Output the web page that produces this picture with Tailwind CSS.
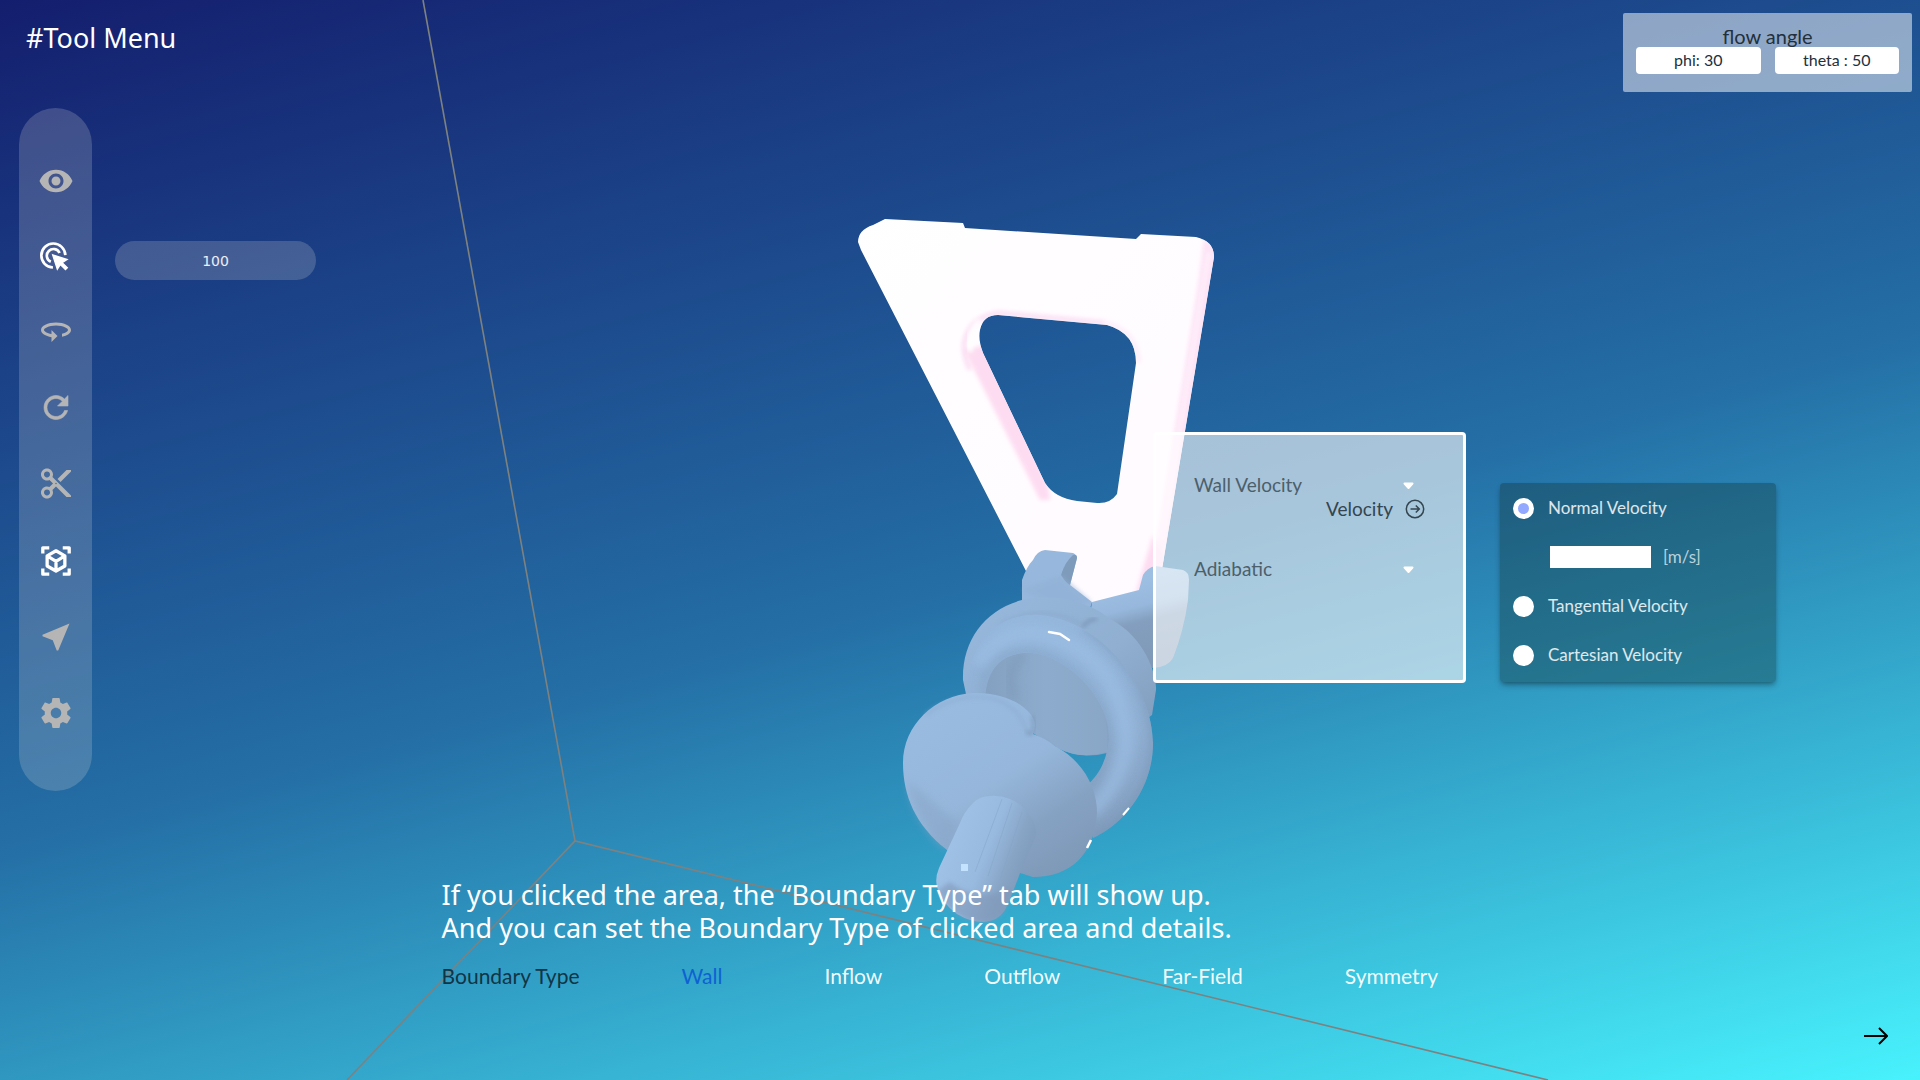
<!DOCTYPE html>
<html lang="en">
<head>
<meta charset="utf-8">
<meta name="viewport" content="width=device-width, initial-scale=1">
<title>Tool Menu</title>
<script src="https://cdn.jsdelivr.net/npm/@tailwindcss/browser@4"></script>
</head>
<body class="font-['Lato','Open_Sans',sans-serif]">
<div class="relative isolate flex min-h-screen flex-col overflow-hidden bg-[linear-gradient(165deg,#141e6e_0%,#246ea5_53%,#48f2fd_100%)]">

  <!-- 3D viewport -->
  <svg class="absolute inset-0 -z-10 h-full w-full" viewBox="0 0 1920 1080" preserveAspectRatio="xMidYMid slice" aria-hidden="true">
    <defs>
      <filter id="b2" x="-20%" y="-20%" width="140%" height="140%"><feGaussianBlur stdDeviation="2"/></filter>
      <filter id="b5" x="-30%" y="-30%" width="160%" height="160%"><feGaussianBlur stdDeviation="5"/></filter>
      <linearGradient id="plate" x1="0" y1="0" x2="1" y2="1"><stop offset="0" stop-color="#fff"/><stop offset="1" stop-color="#fffaff"/></linearGradient>
      <linearGradient id="claw" gradientUnits="userSpaceOnUse" x1="1140" y1="580" x2="1160" y2="660"><stop offset="0" stop-color="#9dbfe2"/><stop offset=".3" stop-color="#97b8dc"/><stop offset=".5" stop-color="#839ebe"/><stop offset="1" stop-color="#8099b8"/></linearGradient>
      <linearGradient id="collar" x1="0" y1="0" x2="1" y2="1"><stop offset="0" stop-color="#97b9dd"/><stop offset=".55" stop-color="#90afd1"/><stop offset="1" stop-color="#7f99b9"/></linearGradient>
      <linearGradient id="well" x1="0" y1="0" x2="1" y2="0"><stop offset="0" stop-color="#84a0c0"/><stop offset=".5" stop-color="#8daccd"/><stop offset="1" stop-color="#89a6c6"/></linearGradient>
      <linearGradient id="ring" gradientUnits="userSpaceOnUse" x1="1060" y1="620" x2="1060" y2="840"><stop offset="0" stop-color="#95b7dc"/><stop offset=".5" stop-color="#90b0d3"/><stop offset="1" stop-color="#829dbe"/></linearGradient>
      <linearGradient id="cone" gradientUnits="userSpaceOnUse" x1="950" y1="700" x2="1060" y2="870"><stop offset="0" stop-color="#99bbe0"/><stop offset=".45" stop-color="#96b7db"/><stop offset=".75" stop-color="#86a2c3"/><stop offset="1" stop-color="#7f99b8"/></linearGradient>
      <linearGradient id="pin" gradientUnits="userSpaceOnUse" x1="950" y1="840" x2="1028" y2="872"><stop offset="0" stop-color="#9fc1e6"/><stop offset=".45" stop-color="#98badf"/><stop offset=".75" stop-color="#88a5c6"/><stop offset="1" stop-color="#7f9ab9"/></linearGradient>
      <clipPath id="plateClip"><path clip-rule="evenodd" d="M858 242Q858 230 873 225L885 219L963 223L965 228L1136 239L1141 234L1196 237Q1214 241 1214 257L1161 575L1140 592L1093 603L1045 590L1027 573L861 250ZM998 315L1107 325Q1136 333 1136 363L1117 494Q1110 504 1097 503L1077 501Q1055 498 1045 483L983 353Q978 340 980 330Q983 315 998 315Z"/></clipPath>
      <clipPath id="ringClip"><path d="M967 705C963 660 985 612 1040 615C1105 622 1153 690 1153 743C1153 790 1122 825 1093 838L1085 787C1107 770 1112 740 1107 722C1098 685 1055 650 1023 653C1000 656 985 670 985 705Z"/></clipPath>
    </defs>

    <g fill="none" stroke="#7d8280" stroke-width="1.6">
      <path d="M423 0L575 841"/>
      <path d="M347 1080L575 841L1548 1080"/>
    </g>

    <!-- selected plate -->
    <g clip-path="url(#plateClip)">
      <rect x="850" y="210" width="370" height="400" fill="url(#plate)"/>
      <path d="M1204 238L1218 250L1164 570L1152 570L1198 285Z" fill="#fde3f6" filter="url(#b2)"/>
      <path d="M1209 252L1188 380L1162 540" fill="none" stroke="#fff4fc" stroke-width="3" filter="url(#b2)"/>
      <path d="M1105 323L998 313Q968 318 964 345Q964 357 970 370" fill="none" stroke="#fbdff4" stroke-width="5" filter="url(#b2)"/>
      <path d="M1105 323Q1136 330 1139 363" fill="none" stroke="#fdeefa" stroke-width="5" filter="url(#b2)"/>
      <path d="M964 350L985 345L1048 485L1050 500L1040 500Z" fill="#fddcf1" filter="url(#b2)"/>
      <path d="M980 320Q965 335 971 352" fill="none" stroke="#fff" stroke-width="5" filter="url(#b2)"/>
      <path d="M1153 535L1136 592L1146 594L1165 560Z" fill="#fddcf1" filter="url(#b2)"/>
    </g>

    <!-- clevis arms -->
    <path d="M1022 606L1022 580Q1027 566 1033 560Q1037 551 1045 550L1073 553Q1077 555 1077 558L1070 585L1092 602L1085 625Z" fill="#97b8dc"/>
    <path d="M1077 558Q1077 554 1073 555Q1065 562 1061 575Q1066 583 1070 585Z" fill="#7f9bbb"/>
    <path d="M1022 590L1061 575L1092 602L1060 610Z" fill="#8fafd3" opacity=".5" filter="url(#b2)"/>
    <path d="M1092 602L1139 590L1143 575Q1147 568 1155 566L1183 570Q1189 572 1189 580L1188 600Q1184 630 1173 658Q1168 667 1153 668L1140 665L1088 628Z" fill="url(#claw)"/>

    <!-- collar -->
    <path d="M963 680C962 640 985 610 1022 600C1060 592 1090 603 1112 620C1145 638 1157 675 1156 690L1152 715L1125 735L1107 753Q1080 760 1058 748L966 694Z" fill="url(#collar)"/>
    <path d="M1000 625Q1045 600 1085 627" fill="none" stroke="#84a2c5" stroke-width="3" opacity=".5" filter="url(#b2)"/>
    <path d="M1083 627Q1088 619 1097 619" fill="none" stroke="#7894b5" stroke-width="3" filter="url(#b2)"/>
    <path d="M983 700C980 665 1010 646 1045 655C1085 670 1112 705 1107 752Q1080 760 1058 748L1020 715Z" fill="url(#well)"/>
    <path d="M1015 700Q1003 668 1025 655" fill="none" stroke="#7b96b5" stroke-width="9" opacity=".5" filter="url(#b5)"/>

    <!-- ring -->
    <g clip-path="url(#ringClip)">
      <rect x="950" y="600" width="220" height="250" fill="url(#ring)"/>
      <path d="M985 700C982 660 1000 653 1025 653C1060 655 1100 690 1109 735Q1108 765 1088 788" fill="none" stroke="#7c98b8" stroke-width="8" opacity=".4" filter="url(#b5)"/>
      <path d="M978 665Q1000 630 1035 633Q1080 640 1108 678Q1126 710 1126 745Q1120 785 1090 812" fill="none" stroke="#9dbfe5" stroke-width="16" opacity=".6" filter="url(#b5)"/>
      <path d="M1085 625Q1122 650 1140 685Q1153 720 1153 743C1153 790 1122 825 1093 838" fill="none" stroke="#7791b0" stroke-width="8" opacity=".6" filter="url(#b5)"/>
    </g>
    <path d="M1049 632L1060 634L1069 640" fill="none" stroke="#fff" stroke-width="2.5" stroke-linecap="round"/>
    <path d="M1123 815L1129 808" stroke="#fff" stroke-width="2"/>

    <!-- cone -->
    <path d="M903 763C903 725 935 695 973 693C1010 692 1034 710 1035 725L1033 734Q1045 738 1055 746C1085 762 1097 790 1097 812C1095 855 1070 877 1033 877L947 850C915 825 903 795 903 763Z" fill="url(#cone)"/>
    <path d="M925 715Q955 693 990 698Q1020 705 1027 733" fill="none" stroke="#89a8cb" stroke-width="3" opacity=".5" filter="url(#b2)"/>
    <path d="M1032 716Q1036 727 1031 734L1026 732" fill="none" stroke="#7691b1" stroke-width="3" opacity=".7" filter="url(#b2)"/>
    <path d="M907 780Q915 825 947 850L960 825Z" fill="#88a6c8" opacity=".6" filter="url(#b5)"/>
    <path d="M1087 848L1091 840" stroke="#fff" stroke-width="2.5"/>

    <!-- pin -->
    <path d="M990 796Q980 796 973 803Q964 812 960 823L939 868Q934 880 938 890Q944 905 957 914Q970 922 984 922Q998 921 1005 910Q1013 893 1020 873L1035 838Q1038 828 1031 817Q1022 804 1010 799Q1000 795 990 796Z" fill="url(#pin)"/>
    <path d="M1002 799L975 872M1012 803L988 876M1022 812L1000 880" stroke="#86a4c6" stroke-width="1" opacity=".5"/>
    <path d="M938 890Q944 905 957 914Q970 922 984 922Q998 921 1005 910L1014 886Q980 905 950 882Z" fill="#8199ba" opacity=".6" filter="url(#b2)"/>
    <rect x="961" y="864" width="7" height="7" fill="#c3e2ff"/>
  </svg>

  <header class="flex h-27 items-start justify-between pr-2 pl-[26px]">
    <h1 class="pt-5 font-['Noto_Sans',sans-serif] text-[27px] leading-9 text-white">#Tool Menu</h1>
    <form class="mt-[13px] w-[289px] rounded-xs bg-white/50 px-[13px] pt-3 pb-[18px] text-[#22303c]">
      <h2 class="h-[22px] text-center text-[20px] leading-[22px]">flow angle</h2>
      <div class="grid grid-cols-2 gap-[14px]">
        <input aria-label="phi" value="phi: 30" class="h-[27px] w-full rounded bg-white pb-0.5 text-center text-[16px]">
        <input aria-label="theta" value="theta : 50" class="h-[27px] w-full rounded bg-white pb-0.5 text-center text-[16px]">
      </div>
    </form>
  </header>

  <main class="flex items-start pr-36 pl-[19px]">
    <nav aria-label="Tools" class="flex w-[73px] flex-col items-center gap-10 rounded-full bg-[#d4d4d4]/22 pt-[55px] pb-[60px] text-[#b5b5b5]">
      <button aria-label="Visibility" class="size-9"><svg viewBox="0 0 24 24" fill="currentColor"><path d="M12 4.5C7 4.5 2.73 7.61 1 12c1.73 4.39 6 7.5 11 7.5s9.27-3.11 11-7.5c-1.73-4.39-6-7.5-11-7.5zM12 17c-2.76 0-5-2.24-5-5s2.24-5 5-5 5 2.24 5 5-2.24 5-5 5zm0-8c-1.66 0-3 1.34-3 3s1.34 3 3 3 3-1.34 3-3-1.34-3-3-3z"/></svg></button>
      <button aria-label="Pick area" class="size-9 text-white"><svg viewBox="0.4 -0.5 27 27" fill="none" stroke="currentColor" stroke-width="2"><path d="M11.6 20.9A9 9 0 1 1 20.9 11.6"/><path d="M10 16.6A5 5 0 1 1 16.6 10"/><path d="M11.4 11.4L22.2 14.9 18.5 17.2 22.4 21.1 21 22.5 17.2 18.6 14.9 22.2Z" fill="currentColor" stroke-width="1"/></svg></button>
      <button aria-label="Rotate view" class="size-9"><svg viewBox="0 2 24 24" fill="currentColor"><path d="M12 7C6.48 7 2 9.24 2 12c0 2.24 2.94 4.13 7 4.77V20l4-4-4-4v2.73c-3.15-.56-5-1.9-5-2.73 0-1.06 3.04-3 8-3s8 1.94 8 3c0 .73-1.46 1.89-4 2.53v2.05c3.53-.77 6-2.53 6-4.58 0-2.76-4.48-5-10-5z"/></svg></button>
      <button aria-label="Reset" class="size-9"><svg viewBox="0 1 24 24" fill="currentColor"><path d="M17.65 6.35C16.2 4.9 14.21 4 12 4c-4.42 0-7.99 3.58-7.99 8s3.57 8 7.99 8c3.73 0 6.84-2.55 7.73-6h-2.08c-.82 2.33-3.04 4-5.65 4-3.31 0-6-2.69-6-6s2.69-6 6-6c1.66 0 3.14.69 4.22 1.78L13 11h7V4l-2.35 2.35z" stroke="currentColor" stroke-width=".4"/></svg></button>
      <button aria-label="Cut" class="size-9"><svg viewBox="0 1 24 24" fill="currentColor"><path d="M9.64 7.64c.23-.5.36-1.05.36-1.64 0-2.21-1.79-4-4-4S2 3.79 2 6s1.79 4 4 4c.59 0 1.14-.13 1.64-.36L10 12l-2.36 2.36C7.14 14.13 6.59 14 6 14c-2.21 0-4 1.79-4 4s1.79 4 4 4 4-1.79 4-4c0-.59-.13-1.14-.36-1.64L12 14l7 7h3v-1L9.64 7.64zM6 8c-1.1 0-2-.89-2-2s.9-2 2-2 2 .89 2 2-.9 2-2 2zm0 12c-1.1 0-2-.89-2-2s.9-2 2-2 2 .89 2 2-.9 2-2 2zm6-7.5c-.28 0-.5-.22-.5-.5s.22-.5.5-.5.5.22.5.5-.22.5-.5.5zM19 3l-6 6 2 2 7-7V3z"/></svg></button>
      <button aria-label="Boundary type" class="size-9 text-white"><svg viewBox="0 0 24 24" fill="none" stroke="currentColor" stroke-width="2.2"><path d="M3.2 7V3.2H7.5M16.5 3.2H20.8V7M20.8 17V20.8H16.5M7.5 20.8H3.2V17" stroke-linejoin="round"/><path d="M12 5.2L17.9 8.6V15.3L12 18.7 6.1 15.3V8.6ZM6.1 8.6L12 12.2 17.9 8.6M12 12.2V18.7" stroke-width="2.2" stroke-linejoin="round"/></svg></button>
      <button aria-label="Navigate" class="size-9"><svg viewBox="0 0 24 24" fill="currentColor"><path d="M21 3L3 10.53v.98l6.84 2.65L12.48 21h.98L21 3z"/></svg></button>
      <button aria-label="Settings" class="size-9"><svg viewBox="0 0 24 24" fill="currentColor"><path d="M19.43 12.98c.04-.32.07-.64.07-.98s-.03-.66-.07-.98l2.11-1.65c.19-.15.24-.42.12-.64l-2-3.46c-.12-.22-.39-.3-.61-.22l-2.49 1c-.52-.4-1.08-.73-1.69-.98l-.38-2.65C14.46 2.18 14.25 2 14 2h-4c-.25 0-.46.18-.49.42l-.38 2.65c-.61.25-1.17.59-1.69.98l-2.49-1c-.23-.09-.49 0-.61.22l-2 3.46c-.13.22-.07.49.12.64l2.11 1.65c-.04.32-.07.65-.07.98s.03.66.07.98l-2.11 1.65c-.19.15-.24.42-.12.64l2 3.46c.12.22.39.3.61.22l2.49-1c.52.4 1.08.73 1.69.98l.38 2.65c.03.24.24.42.49.42h4c.25 0 .46-.18.49-.42l.38-2.65c.61-.25 1.17-.59 1.69-.98l2.49 1c.23.09.49 0 .61-.22l2-3.46c.12-.22.07-.49-.12-.64l-2.11-1.65zM12 15.5c-1.93 0-3.5-1.57-3.5-3.5s1.57-3.5 3.5-3.5 3.5 1.57 3.5 3.5-1.57 3.5-3.5 3.5z"/></svg></button>
    </nav>

    <input aria-label="Selection size" value="100" class="mt-[133px] ml-[23px] h-[39px] w-[201px] rounded-full bg-[#d4d4d4]/22 text-center font-['DejaVu_Sans',sans-serif] text-[14px] text-white/90">

    <div class="mt-81 ml-auto flex items-start gap-[34px]">
      <section aria-label="Wall settings" class="h-[251px] w-[313px] rounded border-3 border-white bg-white/60 px-[38px] pt-[38px] text-[#4c5f6b]">
        <div class="flex h-6 items-center">
          <select aria-label="Velocity condition" class="-mr-[5px] w-[214px] appearance-none text-[19px] leading-6"><option>Wall Velocity</option></select>
          <svg class="pointer-events-none size-[11px]" viewBox="0 0 11 11" fill="#fff" aria-hidden="true"><path d="M1.5 3.5H9.5L5.5 8Z" stroke="#fff" stroke-width="2" stroke-linejoin="round"/></svg>
        </div>
        <button class="ml-auto flex h-6 items-center gap-3 text-[19px] leading-6 text-[#34454f]">Velocity
          <svg class="size-5" viewBox="0 0 20 20" fill="none" stroke="currentColor" stroke-width="1.5" aria-hidden="true"><circle cx="10" cy="10" r="8.7"/><path d="M5.5 10H14M10.8 6.5L14.3 10 10.8 13.5"/></svg>
        </button>
        <div class="mt-9 flex h-6 items-center">
          <select aria-label="Thermal condition" class="-mr-[5px] w-[214px] appearance-none text-[19px] leading-6"><option>Adiabatic</option></select>
          <svg class="pointer-events-none size-[11px]" viewBox="0 0 11 11" fill="#fff" aria-hidden="true"><path d="M1.5 3.5H9.5L5.5 8Z" stroke="#fff" stroke-width="2" stroke-linejoin="round"/></svg>
        </div>
      </section>

      <fieldset class="mt-[51px] flex h-[199px] w-[276px] flex-col rounded bg-[#103030]/35 px-[13px] pt-[13px] text-[17px] leading-6 text-white/85 shadow-md shadow-black/30">
        <label class="flex h-6 items-center gap-[14px]"><input type="radio" name="vel" checked class="size-[21px] appearance-none rounded-full border-5 border-white bg-[#93a9ff]">Normal Velocity</label>
        <label class="mt-[25px] flex h-6 items-center gap-3 pl-[37px] text-white/70"><input type="text" class="h-[22px] w-[101px] bg-white px-1 text-black">[m/s]</label>
        <label class="mt-[25px] flex h-6 items-center gap-[14px]"><input type="radio" name="vel" class="size-[21px] appearance-none rounded-full border-5 border-white bg-white">Tangential Velocity</label>
        <label class="mt-[25px] flex h-6 items-center gap-[14px]"><input type="radio" name="vel" class="size-[21px] appearance-none rounded-full border-5 border-white bg-white">Cartesian Velocity</label>
      </fieldset>
    </div>
  </main>

  <footer class="mt-auto pb-8">
    <p class="pl-[23%] font-['Noto_Sans',sans-serif] text-[27px] leading-[33px] text-white">If you clicked the area, the “Boundary Type” tab will show up.<br>And you can set the Boundary Type of clicked area and details.</p>
    <nav aria-label="Boundary type" class="mt-4 flex h-8 items-center gap-[102px] pl-[23%] text-[21px] text-white/95">
      <span class="text-[#103545]">Boundary Type</span>
      <button class="text-[#0d62d2]">Wall</button>
      <button>Inflow</button>
      <button>Outflow</button>
      <button>Far-Field</button>
      <button>Symmetry</button>
    </nav>
    <div class="mt-8 flex justify-end pr-8">
      <button aria-label="Next" class="size-6"><svg class="w-6" viewBox="0 0 24 24" fill="none" stroke="#000" stroke-width="2"><path d="M0 12H23M15 4L23 12L15 20"/></svg></button>
    </div>
  </footer>
</div>
</body>
</html>
